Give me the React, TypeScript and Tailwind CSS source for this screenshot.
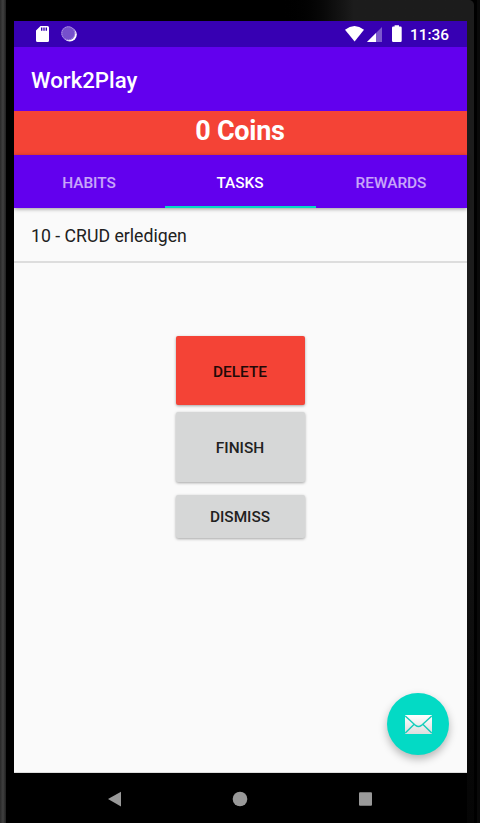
const tabs = ["HABITS", "TASKS", "REWARDS"];

function StatusBar() {
  return (
    <div className="flex h-[26px] shrink-0 items-center bg-[#3700b3] text-white">
      <svg className="ml-[22px] h-4 w-[13px]" viewBox="0 0 13 16" fill="currentColor">
        <path fillRule="evenodd" d="M4.5 0H11.5Q13 0 13 1.5V14.5Q13 16 11.5 16H1.5Q0 16 0 14.5V4.5ZM5 1.5V4.8H6.4V1.5ZM7.3 1.5V4.8H8.7V1.5ZM9.6 1.5V4.8H11V1.5Z" />
      </svg>
      <svg className="ml-[11.5px] h-4 w-4" viewBox="0 0 16 16">
        <circle cx="8.8" cy="8.6" r="7" fill="#fff" />
        <circle cx="7.3" cy="7.3" r="7" fill="#7650cc" />
        <circle cx="7.3" cy="7.3" r="6.5" fill="none" stroke="#b49be6" strokeWidth="1" strokeDasharray="1.4 .6" />
      </svg>
      <svg className="ml-auto h-[26px] w-[61px]" viewBox="345 21 61 26" fill="#fff">
        <path d="M345 29.7Q354.5 22.4 364 29.7L354.6 41.4Z" />
        <path d="M382 27V42H367Z" opacity=".35" />
        <path d="M376 33V42H367Z" />
        <path d="M394.6 25.3H399V26.6H400.5Q401.7 26.6 401.7 27.8V40.8Q401.7 42 400.5 42H393.2Q392 42 392 40.8V27.8Q392 26.6 393.2 26.6H394.6Z" />
      </svg>
      <span className="ml-[4px] mr-[18px] w-[39px] whitespace-nowrap pt-[2px] text-[15.4px] font-medium leading-[26px]">11:36</span>
    </div>
  );
}

function MailButton() {
  return (
    <button aria-label="Mail" className="absolute right-[18px] bottom-[17px] flex size-[62px] items-center justify-center rounded-full bg-[#03dac5] shadow-[0_4px_8px_rgba(0,0,0,0.28)]">
      <svg className="h-[19px] w-[27px]" viewBox="0 0 27 19">
        <defs>
          <linearGradient id="mail" x1="0" y1="0" x2="0" y2="1">
            <stop offset="0" stopColor="#fff" />
            <stop offset="1" stopColor="#dedede" />
          </linearGradient>
        </defs>
        <rect width="27" height="19" rx=".8" fill="url(#mail)" />
        <path d="M.3 1L10.6 10.4Q13.5 12.6 16.4 10.4L26.7 1M.3 18L9.2 9.2M26.7 18L17.8 9.2" fill="none" stroke="#16cdbb" strokeWidth="1.4" />
      </svg>
    </button>
  );
}

export default function App() {
  return (
    <div className="flex h-[823px] w-[480px] overflow-hidden bg-black font-['Roboto','Liberation_Sans',sans-serif]">
      <div className="w-[6px] shrink-0 bg-linear-to-r from-[#292929] via-[#414141] to-[#202020]" />
      <div className="w-2 shrink-0 bg-black" />
      <div className="flex w-[453px] shrink-0 flex-col">
        <div className="h-[21px] shrink-0 bg-linear-to-r from-black from-58% to-[#1c1c1c] to-75%" />
        <StatusBar />
        <header className="flex h-16 shrink-0 items-center bg-[#6200ee] pl-[17px]">
          <h1 className="pt-[2px] text-[22.2px] font-medium leading-none text-white">Work2Play</h1>
        </header>
        <div className="h-11 shrink-0 bg-[#f44336] pr-px pt-[4px] text-center text-[27px] font-bold leading-[32px] tracking-[-0.25px] text-white">0 Coins</div>
        <nav className="relative z-10 grid h-[53px] shrink-0 grid-cols-3 bg-[#6200ee] shadow-[0_1px_4px_rgba(0,0,0,0.4)]">
          {tabs.map((tab) => (
            <button
              key={tab}
              className={
                tab === "TASKS"
                  ? "border-b-2 border-[#03dac5] pr-px pt-[7px] text-[15.4px] font-medium text-white"
                  : "border-b-2 border-transparent pr-px pt-[7px] text-[15.4px] font-medium text-white/65"
              }
            >
              {tab}
            </button>
          ))}
        </nav>
        <main className="relative flex h-[565px] shrink-0 flex-col items-center border-b border-[#dcdcdc] bg-[#fafafa] text-[#212121]">
          <div className="h-[55px] w-full shrink-0 border-b-2 border-[#dddddd] pl-[17px] pt-[2px] text-[17.7px] leading-[53px]">10 - CRUD erledigen</div>
          <button className="mt-[73px] h-[69px] w-[129px] rounded-[2px] bg-[#f44336] pr-px pt-[4px] text-[15.4px] font-medium text-[#210907] shadow-[0_1px_3px_rgba(0,0,0,0.35)]">DELETE</button>
          <button className="mt-[7px] h-[70px] w-[129px] rounded-[2px] bg-[#d6d7d7] pr-px pt-[4px] text-[15.4px] font-medium shadow-[0_1px_3px_rgba(0,0,0,0.35)]">FINISH</button>
          <button className="mt-[13px] h-[43px] w-[129px] rounded-[2px] bg-[#d6d7d7] pr-px pt-[2px] text-[15.4px] font-medium shadow-[0_1px_3px_rgba(0,0,0,0.35)]">DISMISS</button>
          <MailButton />
        </main>
        <footer className="flex h-[50px] shrink-0 justify-center bg-black">
          <svg className="h-[50px] w-[267px]" viewBox="107 773 267 50" fill="#999">
            <path d="M108 799L121 791.8V806.5Z" />
            <circle cx="240" cy="799" r="7.3" />
            <rect x="359" y="792.3" width="13" height="13.5" rx="1" />
          </svg>
        </footer>
      </div>
      <div className="w-[7px] shrink-0 rounded-tr-[5px] bg-linear-to-b from-[#1c1c1c] from-45% to-[#050505]" />
      <div className="w-[3px] shrink-0 bg-black" />
      <div className="w-[3px] shrink-0 bg-[#090909]" />
    </div>
  );
}
